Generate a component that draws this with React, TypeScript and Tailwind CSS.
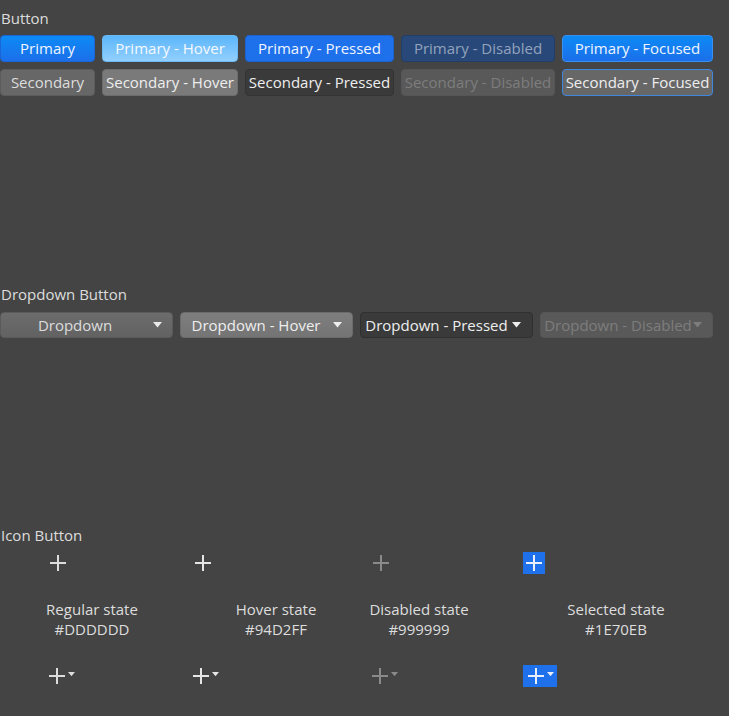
import React from "react";

const Plus = ({ color, size = 18 }: { color: string; size?: number }) => (
  <svg width={size} height={size} viewBox="0 0 18 18">
    <path d="M9 1v16M1 9h16" stroke={color} strokeWidth="2" />
  </svg>
);

const Caret = ({ color, size = 9 }: { color: string; size?: number }) => (
  <svg width={size} height={size * 0.6} viewBox="0 0 10 6">
    <path d="M0 0h10L5 6z" fill={color} />
  </svg>
);

const btn = "h-[27px] rounded-[4px] border flex items-center justify-center whitespace-nowrap text-[15px]";

const dd = "h-[26px] rounded-[4px] border flex items-center whitespace-nowrap text-[15px] pr-[10px]";

export default function App() {
  return (
    <div
      className="w-[729px] h-[716px] bg-[#444444] text-[#dddddd] overflow-hidden"
      style={{ fontFamily: '"Open Sans", "Noto Sans", sans-serif' }}
    >
      <div className="pl-[1px] pt-[9px] text-[15px] leading-[18px]">Button</div>
      <div className="mt-[8px] grid grid-cols-[95px_136px_149px_154px_151px] gap-[7px] w-[713px]">
        <div className={`${btn} bg-gradient-to-b from-[#0b8af6] to-[#1b6fe9] border-[#1a66d6] text-[#eef5ff]`}>Primary</div>
        <div className={`${btn} bg-gradient-to-b from-[#5ab6fa] to-[#92cffd] border-[#6cbaf5] text-[#f4f9ff]`}>Primary - Hover</div>
        <div className={`${btn} bg-[#1e70eb] border-[#1a62cf] text-[#eef5ff]`}>Primary - Pressed</div>
        <div className={`${btn} bg-[#28487a] border-[#223d66] text-[#93a3bb]`}>Primary - Disabled</div>
        <div className={`${btn} bg-gradient-to-b from-[#0b8af6] to-[#1b6fe9] border-[#3b8ff0] text-[#eef5ff]`}>Primary - Focused</div>

        <div className={`${btn} bg-[#676767] border-[#5c5c5c] text-[#dddddd]`}>Secondary</div>
        <div className={`${btn} bg-[#7a7a7a] border-[#6c6c6c] text-[#eeeeee]`}>Secondary - Hover</div>
        <div className={`${btn} bg-[#3a3a3a] border-[#333333] text-[#eeeeee]`}>Secondary - Pressed</div>
        <div className={`${btn} bg-[#595959] border-[#555555] text-[#7d7d7d]`}>Secondary - Disabled</div>
        <div className={`${btn} bg-[#676767] border-[#3f86de] text-[#eeeeee]`}>Secondary - Focused</div>
      </div>

      <div className="pl-[1px] mt-[189px] text-[15px] leading-[18px]">Dropdown Button</div>
      <div className="mt-[9px] grid grid-cols-4 gap-[7px] w-[713px]">
        <div className={`${dd} bg-gradient-to-b from-[#6c6c6c] to-[#626262] border-[#5a5a5a] text-[#dddddd]`}>
          <span className="flex-1 text-center pr-[4px]">Dropdown</span>
          <Caret color="#e8e8e8" />
        </div>
        <div className={`${dd} bg-gradient-to-b from-[#7e7e7e] to-[#747474] border-[#6b6b6b] text-[#eeeeee]`}>
          <span className="flex-1 text-center pr-[2px]">Dropdown - Hover</span>
          <Caret color="#eeeeee" />
        </div>
        <div className={`${dd} bg-[#3a3a3a] border-[#303030] text-[#eeeeee] pr-[11px]`}>
          <span className="flex-1 text-center pl-[4px] pr-[4px]">Dropdown - Pressed</span>
          <Caret color="#eeeeee" />
        </div>
        <div className={`${dd} bg-[#595959] border-[#555555] text-[#7d7d7d] pr-[8px]`}>
          <span className="flex-1 text-center pl-[2px]">Dropdown - Disabled</span>
          <Caret color="#7d7d7d" />
        </div>
      </div>

      <div className="pl-[1px] mt-[188px] text-[15px] leading-[18px]">Icon Button</div>
      <div className="mt-[8px] flex items-center h-[22px]">
        <div className="ml-[47px] w-[22px] h-[22px] flex items-center justify-center"><Plus color="#dddddd" /></div>
        <div className="ml-[123px] w-[22px] h-[22px] flex items-center justify-center"><Plus color="#e6e6e6" /></div>
        <div className="ml-[156px] w-[22px] h-[22px] flex items-center justify-center"><Plus color="#8a8a8a" /></div>
        <div className="ml-[131px] w-[22px] h-[22px] flex items-center justify-center bg-[#1e70eb]"><Plus color="#e8eefa" /></div>
      </div>

      <div className="mt-[25px] flex text-[15px] leading-[20px] text-[#dddddd]">
        <div className="ml-[32px] w-[120px] text-center">Regular state<br />#DDDDDD</div>
        <div className="ml-[64px] w-[120px] text-center">Hover state<br />#94D2FF</div>
        <div className="ml-[23px] w-[120px] text-center">Disabled state<br />#999999</div>
        <div className="ml-[77px] w-[120px] text-center">Selected state<br />#1E70EB</div>
      </div>

      <div className="mt-[26px] flex items-center h-[22px]">
        <div className="ml-[48px] h-[22px] flex items-center gap-[2px]"><Plus color="#dddddd" /><span className="-mt-[4px]"><Caret color="#dddddd" size={7} /></span></div>
        <div className="ml-[117px] h-[22px] flex items-center gap-[2px]"><Plus color="#e6e6e6" /><span className="-mt-[4px]"><Caret color="#e6e6e6" size={7} /></span></div>
        <div className="ml-[152px] h-[22px] flex items-center gap-[2px]"><Plus color="#8a8a8a" /><span className="-mt-[4px]"><Caret color="#8a8a8a" size={7} /></span></div>
        <div className="ml-[125px] w-[34px] h-[22px] flex items-center justify-center gap-[2px] bg-[#1e70eb]"><Plus color="#e8eefa" /><span className="-mt-[4px]"><Caret color="#e8eefa" size={7} /></span></div>
      </div>
    </div>
  );
}
